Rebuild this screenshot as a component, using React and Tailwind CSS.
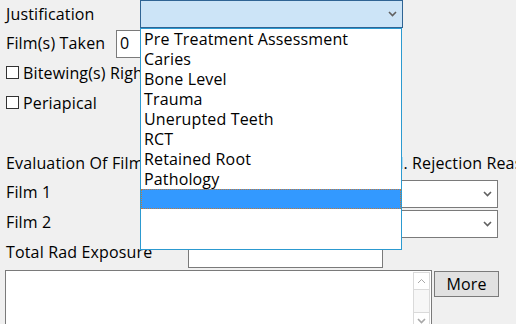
import React from "react";

function Chevron({ className = "", color = "#606060" }) {
  return (
    <svg width="9" height="6" viewBox="0 0 9 6" className={className}>
      <polyline points="1,1 4.5,4.5 8,1" fill="none" stroke={color} strokeWidth="1.6" />
    </svg>
  );
}

function Up({ color = "#a8a8a8" }) {
  return (
    <svg width="9" height="6" viewBox="0 0 9 6">
      <polyline points="1,5 4.5,1.5 8,5" fill="none" stroke={color} strokeWidth="1" />
    </svg>
  );
}

const items = [
  "Pre Treatment Assessment",
  "Caries",
  "Bone Level",
  "Trauma",
  "Unerupted Teeth",
  "RCT",
  "Retained Root",
  "Pathology",
];

export default function App() {
  return (
    <div className="relative w-[516px] h-[324px] overflow-hidden bg-[#f0f0f0] text-black font-['Open_Sans',sans-serif] text-[16px] leading-[20px] tracking-[0.15px]">
      {/* Row 1 */}
      <div className="flex h-[28px]">
        <div className="w-[140px] pl-[6px] pt-[4px] whitespace-nowrap">Justification</div>
        <div className="w-[263px] h-[28px] bg-[#cce4f7] border border-[#2f6494] flex items-center justify-end pr-[5px]">
          <Chevron />
        </div>
      </div>

      {/* Row 2 */}
      <div className="flex h-[28px] mt-[2px]">
        <div className="w-[116px] pl-[6px] pt-[3px] whitespace-nowrap">Film(s) Taken</div>
        <div className="w-[100px] h-[28px] bg-white border border-[#7a7a7a] pl-[3px] pt-[2px]">0</div>
      </div>

      {/* Row 3 */}
      <div className="flex items-start h-[20px] mt-[5px] pl-[6px]">
        <div className="w-[13px] h-[13px] mt-[3px] border border-[#333333] bg-white shrink-0" />
        <div className="ml-[4px] whitespace-nowrap">Bitewing(s) Right</div>
      </div>

      {/* Row 4 */}
      <div className="flex items-start h-[20px] mt-[10px] pl-[6px]">
        <div className="w-[13px] h-[13px] mt-[3px] border border-[#333333] bg-white shrink-0" />
        <div className="ml-[4px] whitespace-nowrap">Periapical</div>
      </div>

      {/* Row 5 */}
      <div className="flex h-[20px] mt-[40px] whitespace-nowrap">
        <div className="w-[373px] shrink-0 pl-[6px]">Evaluation Of Film(s)</div>
        <div className="shrink-0">Eval. Rejection Reason</div>
      </div>

      {/* Row 6 */}
      <div className="flex h-[28px] mt-[7px]">
        <div className="w-[188px] pl-[6px] pt-[2px] whitespace-nowrap">Film 1</div>
        <div className="w-[310px] h-[28px] bg-white border border-[#7a7a7a] flex items-center justify-end pr-[5px]">
          <Chevron />
        </div>
      </div>

      {/* Row 7 */}
      <div className="flex h-[28px] mt-[2px]">
        <div className="w-[188px] pl-[6px] pt-[2px] whitespace-nowrap">Film 2</div>
        <div className="w-[310px] h-[28px] bg-white border border-[#7a7a7a] flex items-center justify-end pr-[5px]">
          <Chevron />
        </div>
      </div>

      {/* Row 8 */}
      <div className="flex h-[28px] mt-[2px]">
        <div className="w-[188px] pl-[6px] pt-[2px] whitespace-nowrap">Total Rad Exposure</div>
        <div className="w-[195px] h-[28px] bg-white border border-[#7a7a7a]" />
      </div>

      {/* Row 9 */}
      <div className="flex mt-[2px] pl-[5px]">
        <div className="w-[427px] h-[62px] bg-white border border-[#7a7a7a] flex justify-end pt-[1px] pr-[1px]">
          <div className="w-[17px] flex flex-col border border-[#dadada] bg-[#f7f7f7]">
            <div className="h-[17px] flex items-center justify-center border-b border-[#dadada] bg-white">
              <Up />
            </div>
            <div className="h-[22px]" />
            <div className="h-[17px] flex items-center justify-center border-t border-[#dadada] bg-white">
              <Chevron color="#a8a8a8" />
            </div>
          </div>
        </div>
        <div className="ml-[2px] mt-[1px] w-[65px] h-[26px] bg-[#e1e1e1] border border-[#7a7a7a] flex items-center justify-center">
          More
        </div>
      </div>

      {/* Dropdown list (popup over content) */}
      <div className="absolute left-[140px] top-[28px] w-[262px] h-[222px] bg-white border border-[#2c9ad0]">
        {items.map((t) => (
          <div key={t} className="h-[20px] pl-[3px] whitespace-nowrap">
            {t}
          </div>
        ))}
        <div className="h-[20px] bg-[#3399ff] border border-dotted border-[#c07a3a]" />
      </div>
    </div>
  );
}
